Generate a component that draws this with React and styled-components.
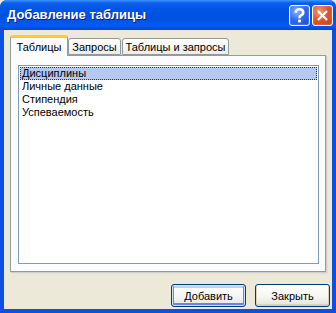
import styled, { createGlobalStyle } from "styled-components";

const Global = createGlobalStyle`
  html, body { margin: 0; padding: 0; background: #ece9d8; }
  body { font-family: "Liberation Sans", Arial, sans-serif; font-size: 11px; color: #000; }
`;

const Window = styled.div`
  width: 336px;
  height: 313px;
  display: flex;
  flex-direction: column;
  background: #0b50e3;
  border-radius: 7px 7px 0 0;
  overflow: hidden;
  box-sizing: border-box;
`;

const TitleBar = styled.div`
  height: 30px;
  flex: none;
  display: flex;
  align-items: center;
  padding: 0 3px 0 7px;
  background: linear-gradient(to bottom, #3d95ff 0%, #0a5feb 10%, #0055e6 30%, #0050e0 60%, #005cf0 85%, #0046cf 100%);
`;

const Title = styled.div`
  flex: 1;
  color: #fff;
  font-family: "Liberation Sans", Arial, sans-serif;
  font-weight: bold;
  font-size: 13px;
  text-shadow: 1px 1px 0 #0a1e8a;
  padding-bottom: 1px;
`;

const CapButton = styled.div`
  width: 21px;
  height: 21px;
  box-sizing: border-box;
  border: 1px solid #fff;
  border-radius: 3px;
  margin-left: 2px;
  display: flex;
  align-items: center;
  justify-content: center;
  background: ${(p) =>
    p.$close
      ? "radial-gradient(circle at 35% 30%, #f0a080 0%, #e0562d 45%, #c53a12 100%)"
      : "radial-gradient(circle at 35% 30%, #8cb4ff 0%, #2f6cf0 45%, #1648d6 100%)"};
  box-shadow: inset 0 0 2px rgba(255, 255, 255, 0.5);
`;

const Body = styled.div`
  flex: 1;
  margin: 0 4px 4px 4px;
  background: #ece9d8;
  padding: 5px 6px 0 6px;
  display: flex;
  flex-direction: column;
`;

const TabStrip = styled.div`
  height: 20px;
  display: flex;
  align-items: flex-end;
  position: relative;
  z-index: 1;
`;

const Tab = styled.div`
  box-sizing: border-box;
  width: ${(p) => p.$w}px;
  margin-left: ${(p) => p.$ml || 0}px;
  height: ${(p) => (p.$active ? 21 : 17)}px;
  margin-bottom: ${(p) => (p.$active ? -1 : 0)}px;
  border: 1px solid #919b9c;
  border-bottom: ${(p) => (p.$active ? "none" : "1px solid #919b9c")};
  border-top: ${(p) => (p.$active ? "3px solid #ffc83c" : "1px solid #919b9c")};
  border-radius: 3px 3px 0 0;
  background: ${(p) =>
    p.$active ? "#fcfcfe" : "linear-gradient(to bottom, #ffffff 0%, #f7f7f4 50%, #ecebe6 100%)"};
  display: flex;
  align-items: ${(p) => (p.$active ? "flex-start" : "center")};
  padding-top: ${(p) => (p.$active ? 3 : 0)}px;
  justify-content: center;
  white-space: nowrap;
`;

const Panel = styled.div`
  height: 217px;
  box-sizing: border-box;
  border: 1px solid #919b9c;
  background: #fcfcfe;
  box-shadow: 1px 1px 0 #d0cfc9, 2px 2px 0 #e2e0d6;
  padding: 9px 6px 7px 7px;
  display: flex;
`;

const ListBox = styled.div`
  flex: 1;
  border: 1px solid #7f9db9;
  background: #fff;
  padding: 1px;
`;

const Item = styled.div`
  height: 13px;
  line-height: 13px;
  padding-left: 2px;
  box-sizing: border-box;
  background: ${(p) => (p.$sel ? "#b4c8f0" : "transparent")};
  outline: ${(p) => (p.$sel ? "1px dotted #333" : "none")};
  outline-offset: -1px;
`;

const ButtonRow = styled.div`
  display: flex;
  justify-content: flex-end;
  gap: 9px;
  margin: 12px -4px 0 0;
`;

const Button = styled.div`
  width: 75px;
  height: 23px;
  box-sizing: border-box;
  border: 1px solid #003c74;
  border-radius: 3px;
  display: flex;
  align-items: center;
  justify-content: center;
  background: linear-gradient(to bottom, #ffffff 0%, #f4f4f0 60%, #e3e2da 100%);
  box-shadow: ${(p) =>
    p.$default
      ? "inset 0 0 0 1px #cee7ff, inset 0 -1px 0 2px #6982ee, inset 0 1px 0 2px #bcd4f6"
      : "inset 0 -1px 0 1px #d8d2bd"};
`;

export default function App() {
  return (
    <>
      <Global />
      <Window>
        <TitleBar>
          <Title>Добавление таблицы</Title>
          <CapButton>
            <svg width="13" height="15" viewBox="0 0 13 15">
              <path d="M2.8 4.8 Q2.8 1.3 6.5 1.3 Q10.2 1.3 10.2 4.5 Q10.2 6.6 7.6 7.6 Q6.5 8.1 6.5 10.2" fill="none" stroke="#fff" strokeWidth="2.6" />
              <rect x="5.1" y="11.6" width="2.8" height="2.8" fill="#fff" />
            </svg>
          </CapButton>
          <CapButton $close>
            <svg width="13" height="13" viewBox="0 0 13 13">
              <path d="M2 2 L11 11 M11 2 L2 11" stroke="#fff" strokeWidth="2.2" />
            </svg>
          </CapButton>
        </TitleBar>
        <Body>
          <TabStrip>
            <Tab $active $w={58}>Таблицы</Tab>
            <Tab $w={53}>Запросы</Tab>
            <Tab $w={107} $ml={1}>Таблицы и запросы</Tab>
          </TabStrip>
          <Panel>
            <ListBox>
              <Item $sel>Дисциплины</Item>
              <Item>Личные данные</Item>
              <Item>Стипендия</Item>
              <Item>Успеваемость</Item>
            </ListBox>
          </Panel>
          <ButtonRow>
            <Button $default>Добавить</Button>
            <Button>Закрыть</Button>
          </ButtonRow>
        </Body>
      </Window>
    </>
  );
}
